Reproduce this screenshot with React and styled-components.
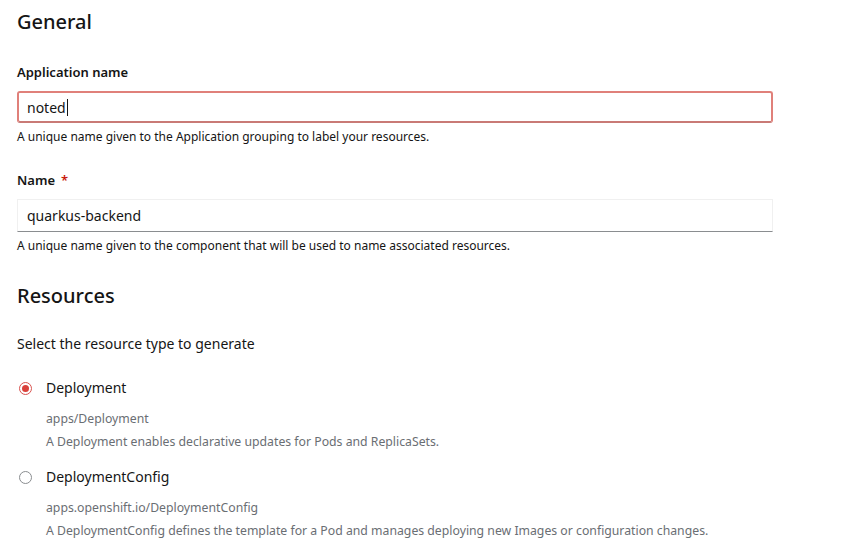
import React from "react";
import styled, { createGlobalStyle } from "styled-components";

const Global = createGlobalStyle`
  html, body { margin: 0; padding: 0; background: #fff; }
  body { font-family: "Noto Sans", "Open Sans", sans-serif; color: #151515; }
`;

const Page = styled.div`
  padding: 8px 84px 0 17px;
  display: flex;
  flex-direction: column;
`;

const Heading = styled.h2`
  margin: 0;
  font-size: 20px;
  font-weight: 500;
  line-height: 28px;
  color: #151515;
  margin-top: ${(p) => p.$top || 0}px;
`;

const Field = styled.div`
  display: flex;
  flex-direction: column;
  margin-top: ${(p) => p.$top || 0}px;
`;

const Label = styled.label`
  font-size: 13px;
  font-weight: 600;
  line-height: 18px;
  margin-bottom: 10px;
`;

const Required = styled.span`
  color: #c9190b;
  margin-left: 6px;
`;

const Input = styled.div`
  box-sizing: border-box;
  height: ${(p) => (p.$invalid ? 32 : 33)}px;
  display: flex;
  align-items: center;
  font-size: 14px;
  color: #151515;
  background: #fff;
  border: ${(p) => (p.$invalid ? "2px solid #e0807a" : "1px solid #f0f0f0")};
  border-bottom-color: ${(p) => (p.$invalid ? "#c97a76" : "#8a8d90")};
  border-radius: ${(p) => (p.$invalid ? 3 : 0)}px;
  padding: 0 9px 0 ${(p) => (p.$invalid ? 8 : 9)}px;
`;

const Caret = styled.span`
  display: inline-block;
  width: 1px;
  height: 17px;
  background: #151515;
  margin-left: 1px;
`;

const Helper = styled.div`
  font-size: 12px;
  line-height: 18px;
  margin-top: 5px;
  color: #151515;
`;

const Intro = styled.div`
  font-size: 14px;
  line-height: 20px;
  margin-top: 24px;
`;

const RadioGroup = styled.div`
  display: flex;
  flex-direction: column;
  gap: 13px;
  margin-top: 23px;
`;

const Option = styled.div`
  display: grid;
  grid-template-columns: 29px 1fr;
`;

const RadioCell = styled.div`
  display: flex;
  align-items: center;
  height: 22px;
  padding-left: 2px;
`;

const Radio = styled.span`
  box-sizing: border-box;
  width: 13px;
  height: 13px;
  border-radius: 50%;
  border: 1px solid ${(p) => (p.$checked ? "#d9534f" : "#8a8d90")};
  display: flex;
  align-items: center;
  justify-content: center;
  &::after {
    content: "";
    display: ${(p) => (p.$checked ? "block" : "none")};
    width: 7px;
    height: 7px;
    border-radius: 50%;
    background: #d9413b;
  }
`;

const OptionLabel = styled.div`
  font-size: 14px;
  line-height: 22px;
`;

const OptionMeta = styled.div`
  grid-column: 2;
  font-size: 12.25px;
  line-height: 23px;
  color: #6a6e73;
  margin-top: ${(p) => p.$top || 0}px;
`;

const options = [
  {
    label: "Deployment",
    api: "apps/Deployment",
    desc: "A Deployment enables declarative updates for Pods and ReplicaSets.",
    checked: true,
  },
  {
    label: "DeploymentConfig",
    api: "apps.openshift.io/DeploymentConfig",
    desc: "A DeploymentConfig defines the template for a Pod and manages deploying new Images or configuration changes.",
    checked: false,
  },
];

export default function App() {
  return (
    <>
      <Global />
      <Page>
        <Heading>General</Heading>
        <Field $top={27}>
          <Label>Application name</Label>
          <Input $invalid>
            noted<Caret />
          </Input>
          <Helper>A unique name given to the Application grouping to label your resources.</Helper>
        </Field>
        <Field $top={25}>
          <Label>
            Name<Required>*</Required>
          </Label>
          <Input>quarkus-backend</Input>
          <Helper>A unique name given to the component that will be used to name associated resources.</Helper>
        </Field>
        <Heading $top={27}>Resources</Heading>
        <Intro>Select the resource type to generate</Intro>
        <RadioGroup>
          {options.map((o) => (
            <Option key={o.label}>
              <RadioCell>
                <Radio $checked={o.checked} />
              </RadioCell>
              <OptionLabel>{o.label}</OptionLabel>
              <OptionMeta $top={8}>{o.api}</OptionMeta>
              <OptionMeta>{o.desc}</OptionMeta>
            </Option>
          ))}
        </RadioGroup>
      </Page>
    </>
  );
}
